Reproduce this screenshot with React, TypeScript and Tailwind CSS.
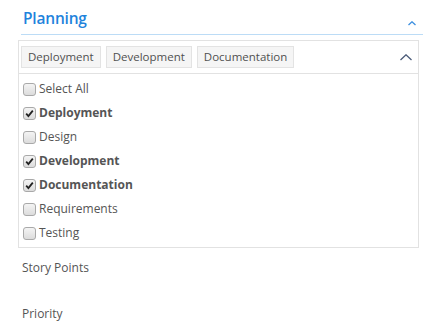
import React from "react";

const tags = ["Deployment", "Development", "Documentation"];

const options = [
  { label: "Select All", checked: false },
  { label: "Deployment", checked: true },
  { label: "Design", checked: false },
  { label: "Development", checked: true },
  { label: "Documentation", checked: true },
  { label: "Requirements", checked: false },
  { label: "Testing", checked: false },
];

function Check({ checked }: { checked: boolean }) {
  return (
    <span className="w-[13px] h-[13px] rounded-[3px] border border-[#a9a9a9] bg-gradient-to-b from-[#f4f4f4] to-[#dcdcdc] flex items-center justify-center shrink-0">
      {checked && (
        <svg width="9" height="9" viewBox="0 0 9 9">
          <path d="M1.2 4.6 L3.4 7 L7.8 1.6" fill="none" stroke="#222" strokeWidth="1.8" />
        </svg>
      )}
    </span>
  );
}

function ChevronUp({ size, color }: { size: number; color: string }) {
  return (
    <svg width={size} height={size / 2 + 1} viewBox={`0 0 ${size} ${size / 2 + 1}`}>
      <path
        d={`M0.5 ${size / 2} L${size / 2} 0.8 L${size - 0.5} ${size / 2}`}
        fill="none"
        stroke={color}
        strokeWidth="1.3"
      />
    </svg>
  );
}

export default function App() {
  return (
    <div className="w-[448px] h-[321px] bg-white overflow-hidden text-[#555] font-['Open_Sans',sans-serif]">
      {/* Section header */}
      <div className="ml-[21px] w-[402px] h-[35px] pt-[7px] border-b border-[#bcdcf6] flex justify-between">
        <span className="pl-[2px] text-[15.5px] font-semibold text-[#1f83dc] leading-[22px] tracking-[-0.2px]">
          Planning
        </span>
        <span className="mt-[14px] mr-[7px]">
          <ChevronUp size={8} color="#3c8fe0" />
        </span>
      </div>

      {/* Multiselect */}
      <div className="mt-[5px] ml-[18px] w-[401px] border border-[#e2e2e2]">
        <div className="h-[33px] border-b border-[#e2e2e2] flex items-center pl-[2px] pr-[6px] gap-[5px]">
          {tags.map((t) => (
            <span
              key={t}
              className="h-[22px] px-[6px] bg-[#f5f5f5] border border-[#e3e3e3] text-[11.5px] leading-[20px] text-[#505050]"
            >
              {t}
            </span>
          ))}
          <span className="ml-auto">
            <ChevronUp size={12} color="#4a5a78" />
          </span>
        </div>
        <div className="pt-[3px] pb-[2px]">
          {options.map((o) => (
            <div key={o.label} className="h-[24px] flex items-center pl-[4px] gap-[3px]">
              <Check checked={o.checked} />
              <span className={`text-[12px] text-[#555] ${o.checked ? "font-bold" : ""}`}>
                {o.label}
              </span>
            </div>
          ))}
        </div>
      </div>

      {/* Other fields */}
      <div className="ml-[22px] mt-[12px] text-[12px] text-[#555] leading-[16px]">Story Points</div>
      <div className="ml-[22px] mt-[30px] text-[12px] text-[#555] leading-[16px]">Priority</div>
    </div>
  );
}
